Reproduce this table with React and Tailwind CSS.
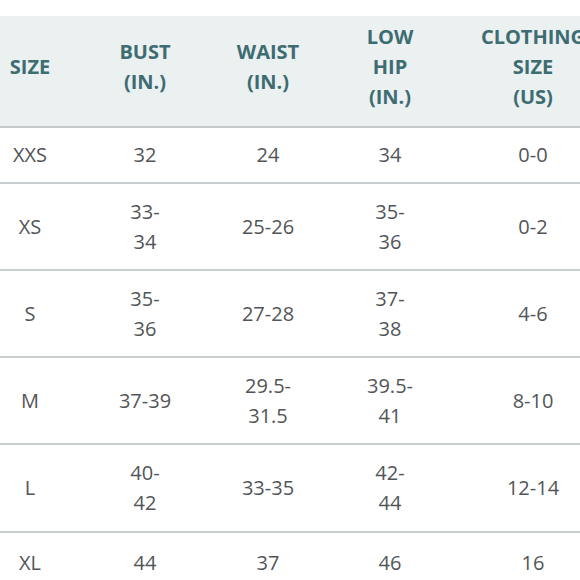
import React from "react";

const rows = [
  { h: "h-[56px]", cells: [["XXS"], ["32"], ["24"], ["34"], ["0-0"]] },
  { h: "h-[87px]", cells: [["XS"], ["33-", "34"], ["25-26"], ["35-", "36"], ["0-2"]] },
  { h: "h-[87px]", cells: [["S"], ["35-", "36"], ["27-28"], ["37-", "38"], ["4-6"]] },
  { h: "h-[87px]", cells: [["M"], ["37-39"], ["29.5-", "31.5"], ["39.5-", "41"], ["8-10"]] },
  { h: "h-[88px]", cells: [["L"], ["40-", "42"], ["33-35"], ["42-", "44"], ["12-14"]] },
  { h: "h-[60px]", cells: [["XL"], ["44"], ["37"], ["46"], ["16"]] },
];

const header = [["SIZE"], ["BUST", "(IN.)"], ["WAIST", "(IN.)"], ["LOW", "HIP", "(IN.)"], ["CLOTHING", "SIZE", "(US)"]];

const grid = "grid grid-cols-[60px_170px_76px_168px_118px] w-[592px]";

function Cell({ lines, cls }) {
  return (
    <div className={"flex flex-col items-center justify-center text-center whitespace-nowrap " + cls}>
      {lines.map((l, i) => (
        <span key={i}>{l}</span>
      ))}
    </div>
  );
}

export default function App() {
  return (
    <div className="w-[580px] h-[580px] overflow-hidden bg-white" style={{ fontFamily: '"Open Sans", sans-serif' }}>
      <div className="h-[16px] bg-white" />
      <div className={grid + " h-[112px] bg-[#ebf0f1] pb-[8px] border-b-2 border-[#c6cbce]"}>
        {header.map((lines, i) => (
          <Cell key={i} lines={lines} cls="text-[20px] leading-[30px] font-bold text-[#3d6c71]" />
        ))}
      </div>
      {rows.map((r, ri) => (
        <div key={ri} className={grid + " " + r.h + (ri < rows.length - 1 ? " border-b-2 border-[#c8cdd0]" : "")}>
          {r.cells.map((lines, i) => (
            <Cell key={i} lines={lines} cls="text-[20px] leading-[30px] text-[#525558]" />
          ))}
        </div>
      ))}
    </div>
  );
}
